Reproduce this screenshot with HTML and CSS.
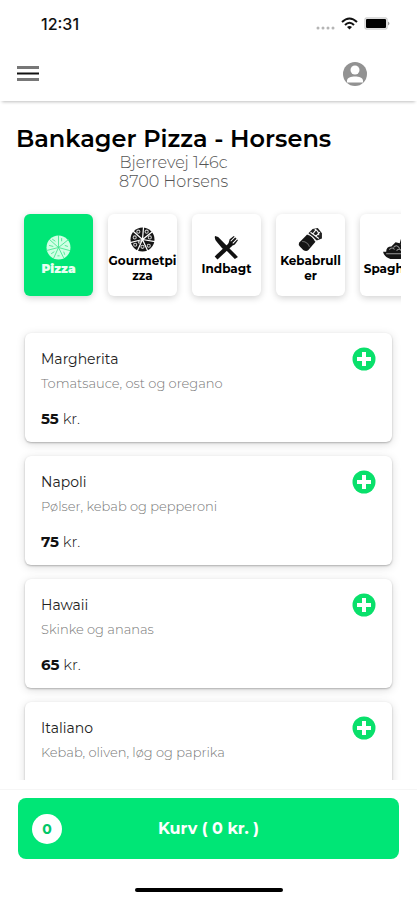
FILE: index.html
```html
<!DOCTYPE html>
<html lang="da">
<head>
<meta charset="utf-8">
<meta name="viewport" content="width=device-width, initial-scale=1">
<title>Bankager Pizza - Horsens</title>
<link rel="stylesheet" href="styles.css">
</head>
<body>
<svg class="defs" aria-hidden="true">
  <symbol id="plus" viewBox="0 0 24 24">
    <circle cx="12" cy="12" r="11.500" fill="#09e06b"/>
    <path d="M12 5v14M5 12h14" stroke="#fff" stroke-width="4"/>
  </symbol>
</svg>
<div class="status">
  <time class="clock">12:31</time>
  <svg class="signals" viewBox="0 0 76 14" aria-hidden="true">
    <g fill="#b5b5b5"><circle cx="2" cy="11" r="1.500"/><circle cx="7" cy="11" r="1.500"/><circle cx="12" cy="11" r="1.500"/><circle cx="17" cy="11" r="1.500"/></g>
    <g fill="none" stroke="#111" stroke-width="2"><path d="M26 5Q33.500-2 41 5"/><path d="M29 8Q33.500 3.500 38 8"/></g>
    <path d="M31 10Q33.500 8 36 10L33.500 12.500Z" fill="#111"/>
    <rect x="49" y="1" width="22" height="11" rx="1" fill="#fff" stroke="#bbb"/>
    <rect x="50" y="2" width="20" height="9" rx="1" fill="#000"/>
    <path d="M72 4.500q3 2 0 4z" fill="#999"/>
  </svg>
</div>
<header class="bar">
  <button class="icon-button" aria-label="Menu">
    <svg width="24" height="18" viewBox="0 0 24 18"><path d="M1 2.500h22M1 14.500h22" stroke="#777" stroke-width="3"/><path d="M1 8.500h22" stroke="#111" stroke-width="2"/></svg>
  </button>
  <button class="icon-button account" aria-label="Profil">
    <svg width="24" height="24" viewBox="0 0 24 24"><circle cx="12" cy="12" r="12" fill="#929292"/><circle cx="12" cy="8" r="4.500" fill="#fff"/><path d="M4 18.500C4 13 20 13 20 18.500V20.500H4Z" fill="#fff"/></svg>
  </button>
</header>
<main class="content">
  <div class="shop">
    <h1>Bankager Pizza - Horsens</h1>
    <address>Bjerrevej 146c<br>8700 Horsens</address>
  </div>
  <nav class="categories" aria-label="Kategorier">
    <button class="category active">
      <svg viewBox="0 0 24 24"><circle cx="12" cy="12" r="11.500" fill="#d0ffe4"/><g fill="none" stroke="#3de58c" stroke-width=".8"><path d="M12 0v12L22 4M12 12l11 3M12 12l5 10M12 12L7 23M12 12L0 15M12 12L3 4"/><path d="M6 4l3 2M3 10l4 1M5 18l3-2M11 20h2M18 19l-1-3M18 10l3 1M15 3v3"/></g></svg>
      <span>Pizza</span>
    </button>
    <button class="category">
      <svg viewBox="0 0 24 24"><circle cx="12" cy="12" r="11.500" fill="#151515"/><g fill="none" stroke="#fff" stroke-width="1"><path d="M13 0L12 12L22 4M12 12l12 2M12 12l5 11M12 12L7 23M12 12L0 15M12 12L3 4" stroke-width="1.200"/></g><g fill="#151515" stroke="#ccc" stroke-width="1"><circle cx="8" cy="4.500" r="1.500"/><circle cx="4.500" cy="10" r="1.500"/><circle cx="5" cy="17" r="1.500"/><circle cx="9" cy="14.500" r="1"/><circle cx="12" cy="19" r="1.500"/><circle cx="18" cy="18" r="1.500"/><circle cx="19" cy="10" r="1.500"/><circle cx="16" cy="4.500" r="1.500"/></g></svg>
      <span>Gourmetpi<br>zza</span>
    </button>
    <button class="category">
      <svg viewBox="0 0 24 24"><path d="M1 1Q0 4 3 7L8 13 11 14 20 23 23 21 13 11 4 2Z" fill="#111"/><path d="M2 22L16 9" stroke="#111" stroke-width="4"/><path d="M14 8l1-4 4-3 4 4-3 4-4 2z" fill="#111"/><path d="M16 6l4-4M18 8l4-4" stroke="#fff" stroke-width="1"/></svg>
      <span>Indbagt</span>
    </button>
    <button class="category">
      <svg viewBox="0 0 24 24"><path d="M1 15L9 7Q13 7 17 14L10 22Q8 24 5 22L2 19Q0 17 1 15Z" fill="#151515"/><path d="M10 6l4-4 5-1 4 5v5l-5 2z" fill="#222"/><path d="M9 7q5 1 8 7M12 5l8 6M14 7l3-4M17 9l4-4M16 2q4 2 4 6" fill="none" stroke="#fff" stroke-width="1"/><path d="M4 14q5 0 7 5" fill="none" stroke="#666"/></svg>
      <span>Kebabrull<br>er</span>
    </button>
    <button class="category">
      <svg viewBox="0 0 24 24"><path d="M20 1l-2 8q4 3 4 7h2q-1 5-6 7H8q-6-2-7-7h3q0-5 5-5l4-4 4 1 2-7z" fill="#151515"/><path d="M7 14q3-3 5 0M11 12q3-4 6 1M14 15q3-3 5 1M4 18h16" fill="none" stroke="#999" stroke-width="1"/></svg>
      <span>Spaghetti</span>
    </button>
  </nav>
  <section class="menu" aria-label="Pizza">
    <article class="dish"><div class="info"><h2>Margherita</h2><p class="description">Tomatsauce, ost og oregano</p><p class="price"><b>55</b> kr.</p></div><button class="icon-button" aria-label="Tilføj Margherita"><svg width="24" height="24"><use href="#plus"/></svg></button></article>
    <article class="dish"><div class="info"><h2>Napoli</h2><p class="description">Pølser, kebab og pepperoni</p><p class="price"><b>75</b> kr.</p></div><button class="icon-button" aria-label="Tilføj Napoli"><svg width="24" height="24"><use href="#plus"/></svg></button></article>
    <article class="dish"><div class="info"><h2>Hawaii</h2><p class="description">Skinke og ananas</p><p class="price"><b>65</b> kr.</p></div><button class="icon-button" aria-label="Tilføj Hawaii"><svg width="24" height="24"><use href="#plus"/></svg></button></article>
    <article class="dish"><div class="info"><h2>Italiano</h2><p class="description">Kebab, oliven, løg og paprika</p></div><button class="icon-button" aria-label="Tilføj Italiano"><svg width="24" height="24"><use href="#plus"/></svg></button></article>
  </section>
</main>
<footer class="checkout">
  <button class="cart"><span class="count">0</span><span class="total">Kurv ( 0 kr. )</span></button>
  <div class="home"></div>
</footer>
</body>
</html>
```
FILE: styles.css
```css
* { box-sizing: border-box; }
body { margin: 0; height: 100vh; display: flex; flex-direction: column; overflow: hidden; background: #fff; color: #111; font-family: Montserrat, Inter, sans-serif; }
h1, h2, p { margin: 0; }
button { font: inherit; color: inherit; border: 0; padding: 0; background: none; }
svg { display: block; }
.defs { position: absolute; width: 0; height: 0; }
.status { flex: none; display: flex; align-items: center; justify-content: space-between; height: 48px; padding: 0 25px 0 41px; }
.clock { font-family: Inter, sans-serif; font-size: 16px; font-weight: 500; }
.signals { width: 76px; height: 14px; }
.bar { flex: none; display: flex; align-items: center; justify-content: space-between; height: 53px; padding: 0 50px 2px 16px; box-shadow: 0 3px 3px -2px rgba(0, 0, 0, .25); }
.icon-button { flex: none; }
.content { flex: 1; min-height: 0; display: flex; flex-direction: column; padding: 24px 16px 0; }
.shop { align-self: flex-start; text-align: center; }
h1 { font-size: 24px; line-height: 28px; font-weight: 600; color: #000; }
address { font-style: normal; font-size: 16px; line-height: 19px; font-weight: 300; color: #555; }
.categories { flex: none; display: flex; gap: 15px; padding: 23px 8px 22px; overflow: hidden; }
.category { flex: none; width: 69px; height: 82px; display: flex; flex-direction: column; align-items: center; justify-content: center; gap: 1px; border-radius: 6px; background: #fff; box-shadow: 0 2px 7px rgba(0, 0, 0, .18); font-size: 12px; line-height: 15px; font-weight: 700; color: #000; }
.category svg { width: 25px; height: 25px; }
.category.active { background: #00e676; color: #e8fff2; font-weight: 900; }
.menu { flex: 1; min-height: 0; display: flex; flex-direction: column; gap: 14px; padding: 15px 9px 0; overflow: hidden; }
.dish { flex: none; min-height: 109px; display: flex; align-items: flex-start; justify-content: space-between; padding: 14px 16px 12px; border-radius: 6px; background: #fff; box-shadow: 0 1px 2px rgba(0, 0, 0, .25), 0 2px 10px rgba(0, 0, 0, .14); }
h2 { font-size: 14px; line-height: 24px; font-weight: 400; color: #222; }
.description { font-size: 13px; line-height: 24px; font-weight: 300; color: #777; }
.price { margin-top: 12px; font-size: 15px; line-height: 24px; font-weight: 300; }
.dish .price { margin-bottom: -1px; }
.price b { font-weight: 700; }
.checkout { flex: none; margin-top: 9px; padding: 8px 18px; border-top: 1px solid #f6f6f6; }
.cart { display: grid; grid-template-columns: 30px 1fr 30px; align-items: center; width: 100%; height: 61px; padding: 0 14px; border-radius: 8px; background: #00e676; color: #fff; font-size: 16px; font-weight: 700; }
.count { display: grid; place-items: center; height: 30px; border-radius: 50%; background: #fff; color: #00c868; font-size: 14px; }
.home { width: 148px; height: 4px; margin: 29px auto 0; border-radius: 2px; background: #000; }
```
